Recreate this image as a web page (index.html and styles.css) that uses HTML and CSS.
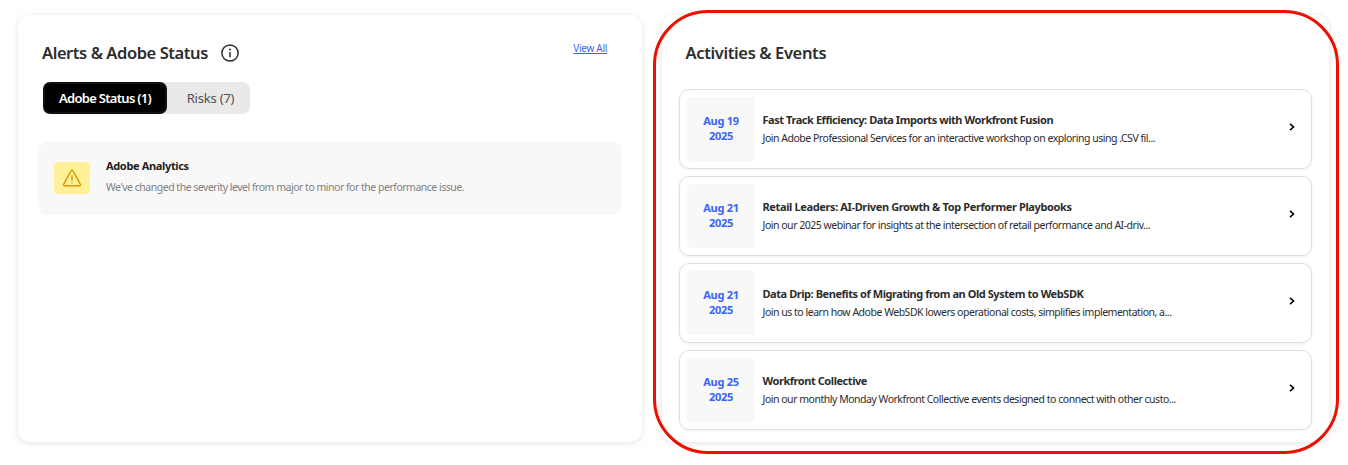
FILE: index.html
```
<!DOCTYPE html>
<html lang="en">
<head>
<meta charset="utf-8">
<title>Alerts and Activities</title>
<link rel="stylesheet" href="styles.css">
</head>
<body>
<main class="dashboard">
  <section class="card alerts">
    <header class="alerts-header">
      <h2 class="title title-alerts">Alerts &amp; Adobe Status</h2>
      <svg class="info" viewBox="0 0 18 18" fill="none" stroke="#2c2c2c" stroke-width="1.5"><circle cx="9" cy="9" r="8.1"/><path d="M9 8v5.2"/><circle cx="9" cy="5.4" r="1" fill="#2c2c2c" stroke="none"/></svg>
      <a class="view-all" href="#">View All</a>
    </header>
    <div class="tabs">
      <button class="tab tab-active">Adobe Status (1)</button>
      <button class="tab">Risks (7)</button>
    </div>
    <article class="alert">
      <div class="alert-icon">
        <svg viewBox="0 0 20 20" width="20" height="20" fill="none" stroke="#d69b0c" stroke-width="1.5" stroke-linejoin="round" stroke-linecap="round"><path d="M9.1 2.7 1.7 16.1a1 1 0 0 0 .9 1.6h14.8a1 1 0 0 0 .9-1.6L10.9 2.7a1 1 0 0 0-1.8 0Z"/><path d="M10 7.7v4.2M10 14.6v.1"/></svg>
      </div>
      <div class="alert-body">
        <h3 class="alert-title">Adobe Analytics</h3>
        <p class="alert-text">We've changed the severity level from major to minor for the performance issue.</p>
      </div>
    </article>
  </section>
  <section class="card events">
    <h2 class="title title-events">Activities &amp; Events</h2>
    <div class="event-list">
      <article class="event">
        <div class="date">Aug 19<br>2025</div>
        <div class="event-body"><h3 class="event-title">Fast Track Efficiency: Data Imports with Workfront Fusion</h3><p class="event-text">Join Adobe Professional Services for an interactive workshop on exploring using .CSV fil...</p></div>
        <svg class="chevron" viewBox="0 0 6 8"><path d="M1 .8 4.5 4 1 7.2"/></svg>
      </article>
      <article class="event">
        <div class="date">Aug 21<br>2025</div>
        <div class="event-body"><h3 class="event-title event-title-wide">Retail Leaders: AI-Driven Growth &amp; Top Performer Playbooks</h3><p class="event-text">Join our 2025 webinar for insights at the intersection of retail performance and AI-driv...</p></div>
        <svg class="chevron" viewBox="0 0 6 8"><path d="M1 .8 4.5 4 1 7.2"/></svg>
      </article>
      <article class="event">
        <div class="date">Aug 21<br>2025</div>
        <div class="event-body"><h3 class="event-title">Data Drip: Benefits of Migrating from an Old System to WebSDK</h3><p class="event-text">Join us to learn how Adobe WebSDK lowers operational costs, simplifies implementation, a...</p></div>
        <svg class="chevron" viewBox="0 0 6 8"><path d="M1 .8 4.5 4 1 7.2"/></svg>
      </article>
      <article class="event">
        <div class="date">Aug 25<br>2025</div>
        <div class="event-body"><h3 class="event-title">Workfront Collective</h3><p class="event-text">Join our monthly Monday Workfront Collective events designed to connect with other custo...</p></div>
        <svg class="chevron" viewBox="0 0 6 8"><path d="M1 .8 4.5 4 1 7.2"/></svg>
      </article>
    </div>
    <div class="highlight"></div>
  </section>
</main>
</body>
</html>
```
FILE: styles.css
```
* { box-sizing: border-box; margin: 0; }
body { background: #fff; color: #2c2c2c; font-family: "Noto Sans", "Open Sans", sans-serif; overflow: hidden; }
.dashboard { display: grid; grid-template-columns: 624px 667px; gap: 20px; height: 465px; padding: 15px 19px 23px 18px; }
.card { border-radius: 12px; background: #fff; box-shadow: 0 1px 6px rgba(0, 0, 0, .12); }
.title { font-size: 16.5px; font-weight: 600; line-height: 24px; white-space: nowrap; }
.title-alerts { letter-spacing: -.43px; }
.title-events { letter-spacing: -.37px; }

.alerts { padding: 26px 20px 0; }
.alerts-header { display: flex; align-items: center; height: 24px; padding: 0 15px 0 4px; }
.info { width: 18px; height: 18px; margin-left: 13.5px; }
.view-all { margin: -10px 0 0 auto; color: #3b63fb; font-size: 10px; line-height: 14px; letter-spacing: -.3px; text-underline-offset: 1px; }
.tabs { display: inline-flex; height: 32px; margin: 17px 0 0 5px; border-radius: 7px; background: #e9e9e9; }
.tab { width: 83px; padding: 0 0 0 4px; border: 0; border-radius: 7px; background: none; color: #505050; font: 400 13px "Noto Sans", sans-serif; letter-spacing: -.2px; white-space: nowrap; }
.tab-active { width: 124px; padding: 0; border: 2px solid #111; background: #000; color: #fff; font-weight: 600; letter-spacing: -.7px; }
.alert { display: flex; align-items: center; gap: 16px; height: 74px; margin-top: 27px; padding: 0 16px; border-radius: 10px; background: #f8f8f8; }
.alert-icon { display: grid; place-items: center; width: 36px; height: 32px; border-radius: 4px; background: #fff197; }
.alert-body { padding-bottom: 3px; }
.alert-title { font-size: 11px; font-weight: 700; line-height: 16px; letter-spacing: -.35px; color: #222; }
.alert-text { margin-top: 5px; font-size: 10.5px; line-height: 16px; letter-spacing: -.49px; color: #808080; white-space: nowrap; }

.events { position: relative; padding: 26px 17px 0; }
.title-events { padding-left: 6.5px; }
.event-list { display: grid; gap: 7px; margin-top: 24px; }
.event { display: flex; align-items: center; gap: 7.5px; height: 80px; padding: 0 16.5px 0 7px; border: 1px solid #dedede; border-radius: 10px; box-shadow: 0 1px 3px rgba(0, 0, 0, .06); }
.date { width: 68px; height: 64px; padding-top: 16px; border-radius: 4px; background: #f8f8f8; color: #3b63fb; text-align: center; font-size: 11px; font-weight: 700; line-height: 15px; letter-spacing: -.25px; }
.event-body { flex: 1; padding-bottom: 1px; white-space: nowrap; }
.event-title { font-size: 11px; font-weight: 700; line-height: 18px; letter-spacing: -.44px; }
.event-title-wide { letter-spacing: -.37px; }
.event-text { font-size: 10.5px; line-height: 18px; letter-spacing: -.48px; }
.chevron { width: 6px; height: 8px; margin-bottom: 4px; fill: none; stroke: #000; stroke-width: 1.6; }
.highlight { position: absolute; inset: -5px -10px -12px -9px; border: 3px solid #eb1000; border-radius: 55px; pointer-events: none; }
```
